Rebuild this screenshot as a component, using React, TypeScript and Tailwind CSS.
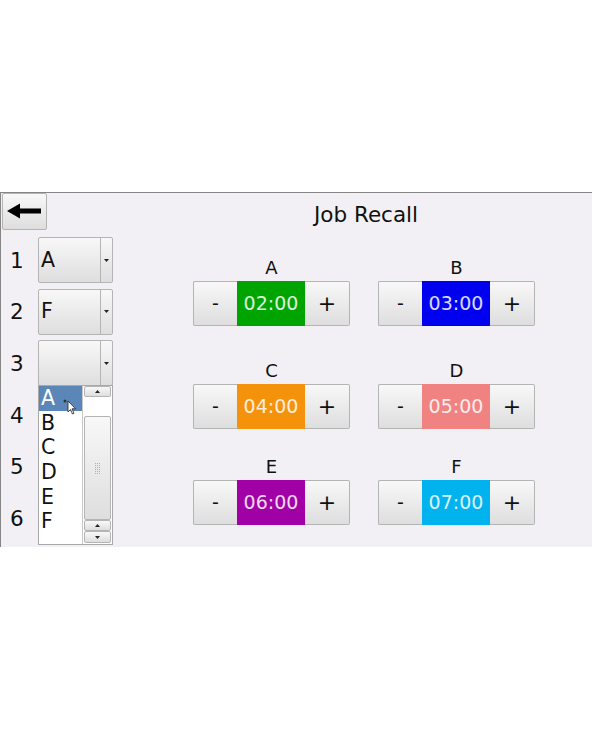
import React from 'react';

const btn = 'bg-gradient-to-b from-[#f8f8f8] to-[#dedede] border border-[#b4b4b4] rounded-[2px]';

const timers = [
  { label: 'A', time: '02:00', color: 'bg-[#00a400]' },
  { label: 'B', time: '03:00', color: 'bg-[#0000f0]' },
  { label: 'C', time: '04:00', color: 'bg-[#f5920c]' },
  { label: 'D', time: '05:00', color: 'bg-[#f08282]' },
  { label: 'E', time: '06:00', color: 'bg-[#a000a6]' },
  { label: 'F', time: '07:00', color: 'bg-[#00b2ee]' },
];

const Tri = ({ up }: { up?: boolean }) => (
  <svg width="5" height="3" viewBox="0 0 5 3">
    <path d={up ? 'M0 3 L2.5 0 L5 3 Z' : 'M0 0 L5 0 L2.5 3 Z'} fill="#222" />
  </svg>
);

const Combo = ({ value }: { value: string }) => (
  <div className={`${btn} w-[75px] h-[46px] flex`}>
    <div className="flex-1 flex items-center pl-[2px] text-[20.5px] text-[#111]">{value}</div>
    <div className="w-[12px] border-l border-[#b4b4b4] flex items-center justify-center">
      <Tri />
    </div>
  </div>
);

const Timer = ({ label, time, color }: { label: string; time: string; color: string }) => (
  <div className="flex flex-col items-center">
    <div className="h-[22px] leading-[22px] text-[18px] text-[#111] mb-[2px]">{label}</div>
    <div className="flex h-[45px] w-[157px]">
      <div className={`${btn} w-[44px] flex items-center justify-center text-[19px] text-[#111] rounded-r-none border-r-0`}>-</div>
      <div className={`${color} w-[68px] flex items-center justify-center text-[19px] text-white/85`}>{time}</div>
      <div className={`${btn} flex-1 flex items-center justify-center text-[22px] text-[#111] rounded-l-none border-l-0`}>+</div>
    </div>
  </div>
);

const DropList = () => (
  <div className="absolute left-[37px] top-[45px] w-[75px] h-[160px] bg-white border border-[#a8a8a8] flex z-10">
    <div className="w-[43px] flex flex-col text-[20.5px] leading-[24.6px] text-[#111]">
      {['A', 'B', 'C', 'D', 'E', 'F'].map((l, i) => (
        <div key={l} className={i === 0 ? 'relative bg-[#5a87b8] text-white pl-[2px]' : 'pl-[2px]'}>
          {l}
          {i === 0 && (
            <svg className="absolute left-[24px] top-[13px]" width="14" height="16" viewBox="0 0 14 16">
              <circle cx="2" cy="2" r="1.5" fill="#333" />
              <path d="M5 2 L5 13 L7.5 10.5 L9.5 15 L11 14.3 L9 9.8 L12.5 9.8 Z" fill="#fff" stroke="#222" strokeWidth="0.8" />
            </svg>
          )}
        </div>
      ))}
    </div>
    <div className="flex-1 flex flex-col border-l border-[#c8c8c8] px-[1px]">
      <div className={`${btn} h-[11px] flex items-center justify-center`}><Tri up /></div>
      <div className="h-[19px] bg-white" />
      <div className={`${btn} flex-1 flex items-center justify-center`}>
        <div className="grid grid-cols-3 gap-[1px]">
          {Array.from({ length: 18 }).map((_, i) => (
            <div key={i} className="w-[1px] h-[1px] bg-[#b0b0b0]" />
          ))}
        </div>
      </div>
      <div className={`${btn} h-[11px] flex items-center justify-center`}><Tri up /></div>
      <div className={`${btn} h-[12px] flex items-center justify-center mb-[1px]`}><Tri /></div>
    </div>
  </div>
);

export default function App() {
  return (
    <div className="w-[592px] h-[740px] bg-white pt-[192px] font-['DejaVu_Sans',sans-serif]">
      <div className="h-[355px] bg-[#f3f0f5] border-t-[1.5px] border-l-[1.5px] border-[#858585] flex">
        {/* left column */}
        <div className="w-[116px] flex flex-col">
          <div className={`${btn} ml-[1px] w-[45px] h-[37px] flex items-center justify-center`}>
            <svg width="36" height="18" viewBox="0 0 36 18">
              <path d="M0 8 L13 0.5 L13 5.5 L34 5.5 L34 10.5 L13 10.5 L13 15.5 Z" fill="#000" />
            </svg>
          </div>
          <div className="mt-[7px] flex flex-col gap-[5.6px]">
            {['1', '2', '3', '4', '5', '6'].map((n, i) => (
              <div key={n} className="relative h-[46px] flex items-center">
                <div className="w-[37px] pl-[9px] pt-[2px] text-[21.5px] text-[#111]">{n}</div>
                {i === 0 && <Combo value="A" />}
                {i === 1 && <Combo value="F" />}
                {i === 2 && <Combo value="" />}
                {i === 2 && <DropList />}
              </div>
            ))}
          </div>
        </div>
        {/* right area */}
        <div className="flex-1 flex flex-col">
          <div className="mt-[9px] pl-[23px] h-[25px] leading-[25px] text-[21.5px] text-[#111] text-center">Job Recall</div>
          <div className="pl-[76px] mt-[30px] grid grid-cols-[157px_157px] gap-x-[28px]">
            <Timer {...timers[0]} />
            <Timer {...timers[1]} />
            <div className="col-span-2 h-[34px]" />
            <Timer {...timers[2]} />
            <Timer {...timers[3]} />
            <div className="col-span-2 h-[27px]" />
            <Timer {...timers[4]} />
            <Timer {...timers[5]} />
          </div>
        </div>
      </div>
    </div>
  );
}
